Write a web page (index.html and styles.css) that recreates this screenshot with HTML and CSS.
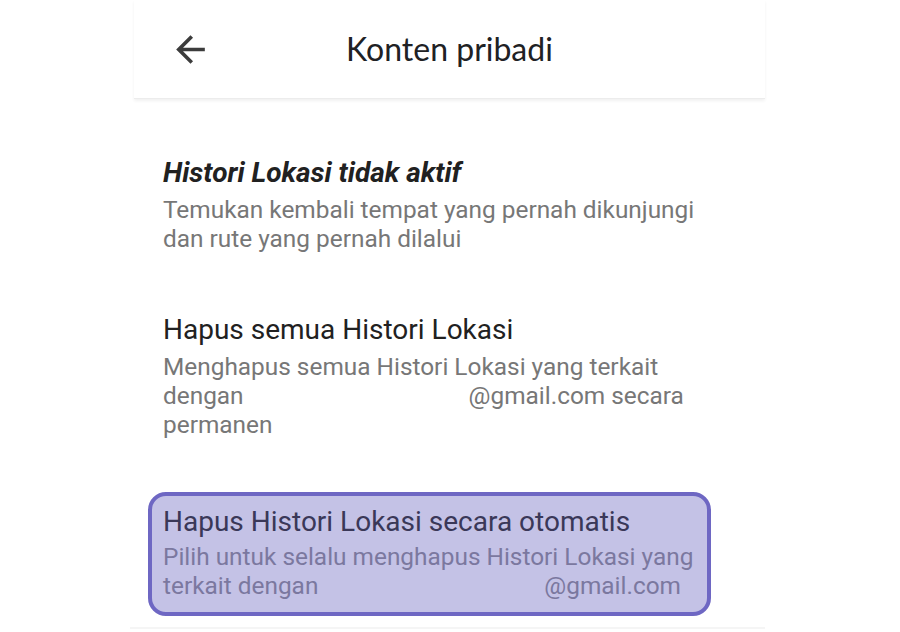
FILE: index.html
```html
<!DOCTYPE html>
<html lang="id">
<head>
<meta charset="utf-8">
<title>Konten pribadi</title>
<link rel="stylesheet" href="styles.css">
</head>
<body>
<div class="page">
  <header class="header">
    <div class="back">
      <svg viewBox="0 0 24 24" width="43" height="43" aria-hidden="true"><path d="M20 11H7.83l5.59-5.59L12 4l-8 8 8 8 1.41-1.41L7.83 13H20v-2z" fill="#3c3c3c"/></svg>
    </div>
    <h1 class="title">Konten pribadi</h1>
    <div></div>
  </header>
  <main class="list">
    <section class="item item-first">
      <div class="item-title bold-italic">Histori Lokasi tidak aktif</div>
      <div class="item-sub">Temukan kembali tempat yang pernah dikunjungi dan rute yang pernah dilalui</div>
    </section>
    <section class="item item-second">
      <div class="item-title">Hapus semua Histori Lokasi</div>
      <div class="item-sub">
        <span class="line">Menghapus semua Histori Lokasi yang terkait</span>
        <span class="line"><span>dengan</span><span class="email email-a">@gmail.com secara</span></span>
        <span class="line">permanen</span>
      </div>
    </section>
    <section class="item item-highlight">
      <div class="item-title">Hapus Histori Lokasi secara otomatis</div>
      <div class="item-sub">
        <span class="line">Pilih untuk selalu menghapus Histori Lokasi yang</span>
        <span class="line"><span>terkait dengan</span><span class="email email-b">@gmail.com</span></span>
      </div>
    </section>
  </main>
  <div class="divider"></div>
</div>
</body>
</html>
```
FILE: styles.css
```css
html, body {
  margin: 0;
  padding: 0;
  background: #ffffff;
}
body {
  font-family: Roboto, "Liberation Sans", sans-serif;
  width: 900px;
  height: 632px;
  overflow: hidden;
}
.page {
  width: 631px;
  margin-left: 134px;
}
.header {
  display: grid;
  grid-template-columns: 1fr auto 1fr;
  align-items: center;
  height: 98px;
  border-bottom: 1px solid #ececec;
  box-shadow: 0 2px 3px rgba(0, 0, 0, 0.06);
}
.back {
  padding-left: 35px;
  display: flex;
  align-items: center;
}
.back svg {
  display: block;
}
.title {
  margin: 0;
  font-family: Lato, "Open Sans", sans-serif;
  font-weight: 400;
  font-size: 32px;
  line-height: 40px;
  color: #202124;
}
.list {
  padding: 0 29px;
}
.item {
  width: 550px;
}
.item-title {
  font-size: 28px;
  line-height: 32px;
  color: #212121;
}
.bold-italic {
  font-weight: 700;
  font-style: italic;
}
.item-sub {
  font-size: 24.4px;
  line-height: 29px;
  color: #777777;
  margin-top: 6px;
}
.line {
  display: block;
  white-space: nowrap;
}
.item-first {
  padding-top: 58px;
}
.item-second {
  margin-top: 61px;
}
.email {
  display: inline-block;
}
.email-a {
  margin-left: 225px;
}
.email-b {
  margin-left: 226px;
}
.item-highlight {
  margin-top: 53px;
  margin-left: -15px;
  width: 563px;
  box-sizing: border-box;
  padding: 10px 6px 12px 11px;
  border: 4px solid #6e67c3;
  border-radius: 18px;
  background: #c4c2e6;
}
.item-highlight .item-title {
  color: #3a3858;
}
.item-highlight .item-sub {
  color: #7b789f;
  margin-top: 4px;
}
.divider {
  margin-top: 11px;
  margin-left: -4px;
  height: 2px;
  background: #f5f5f5;
}
```
